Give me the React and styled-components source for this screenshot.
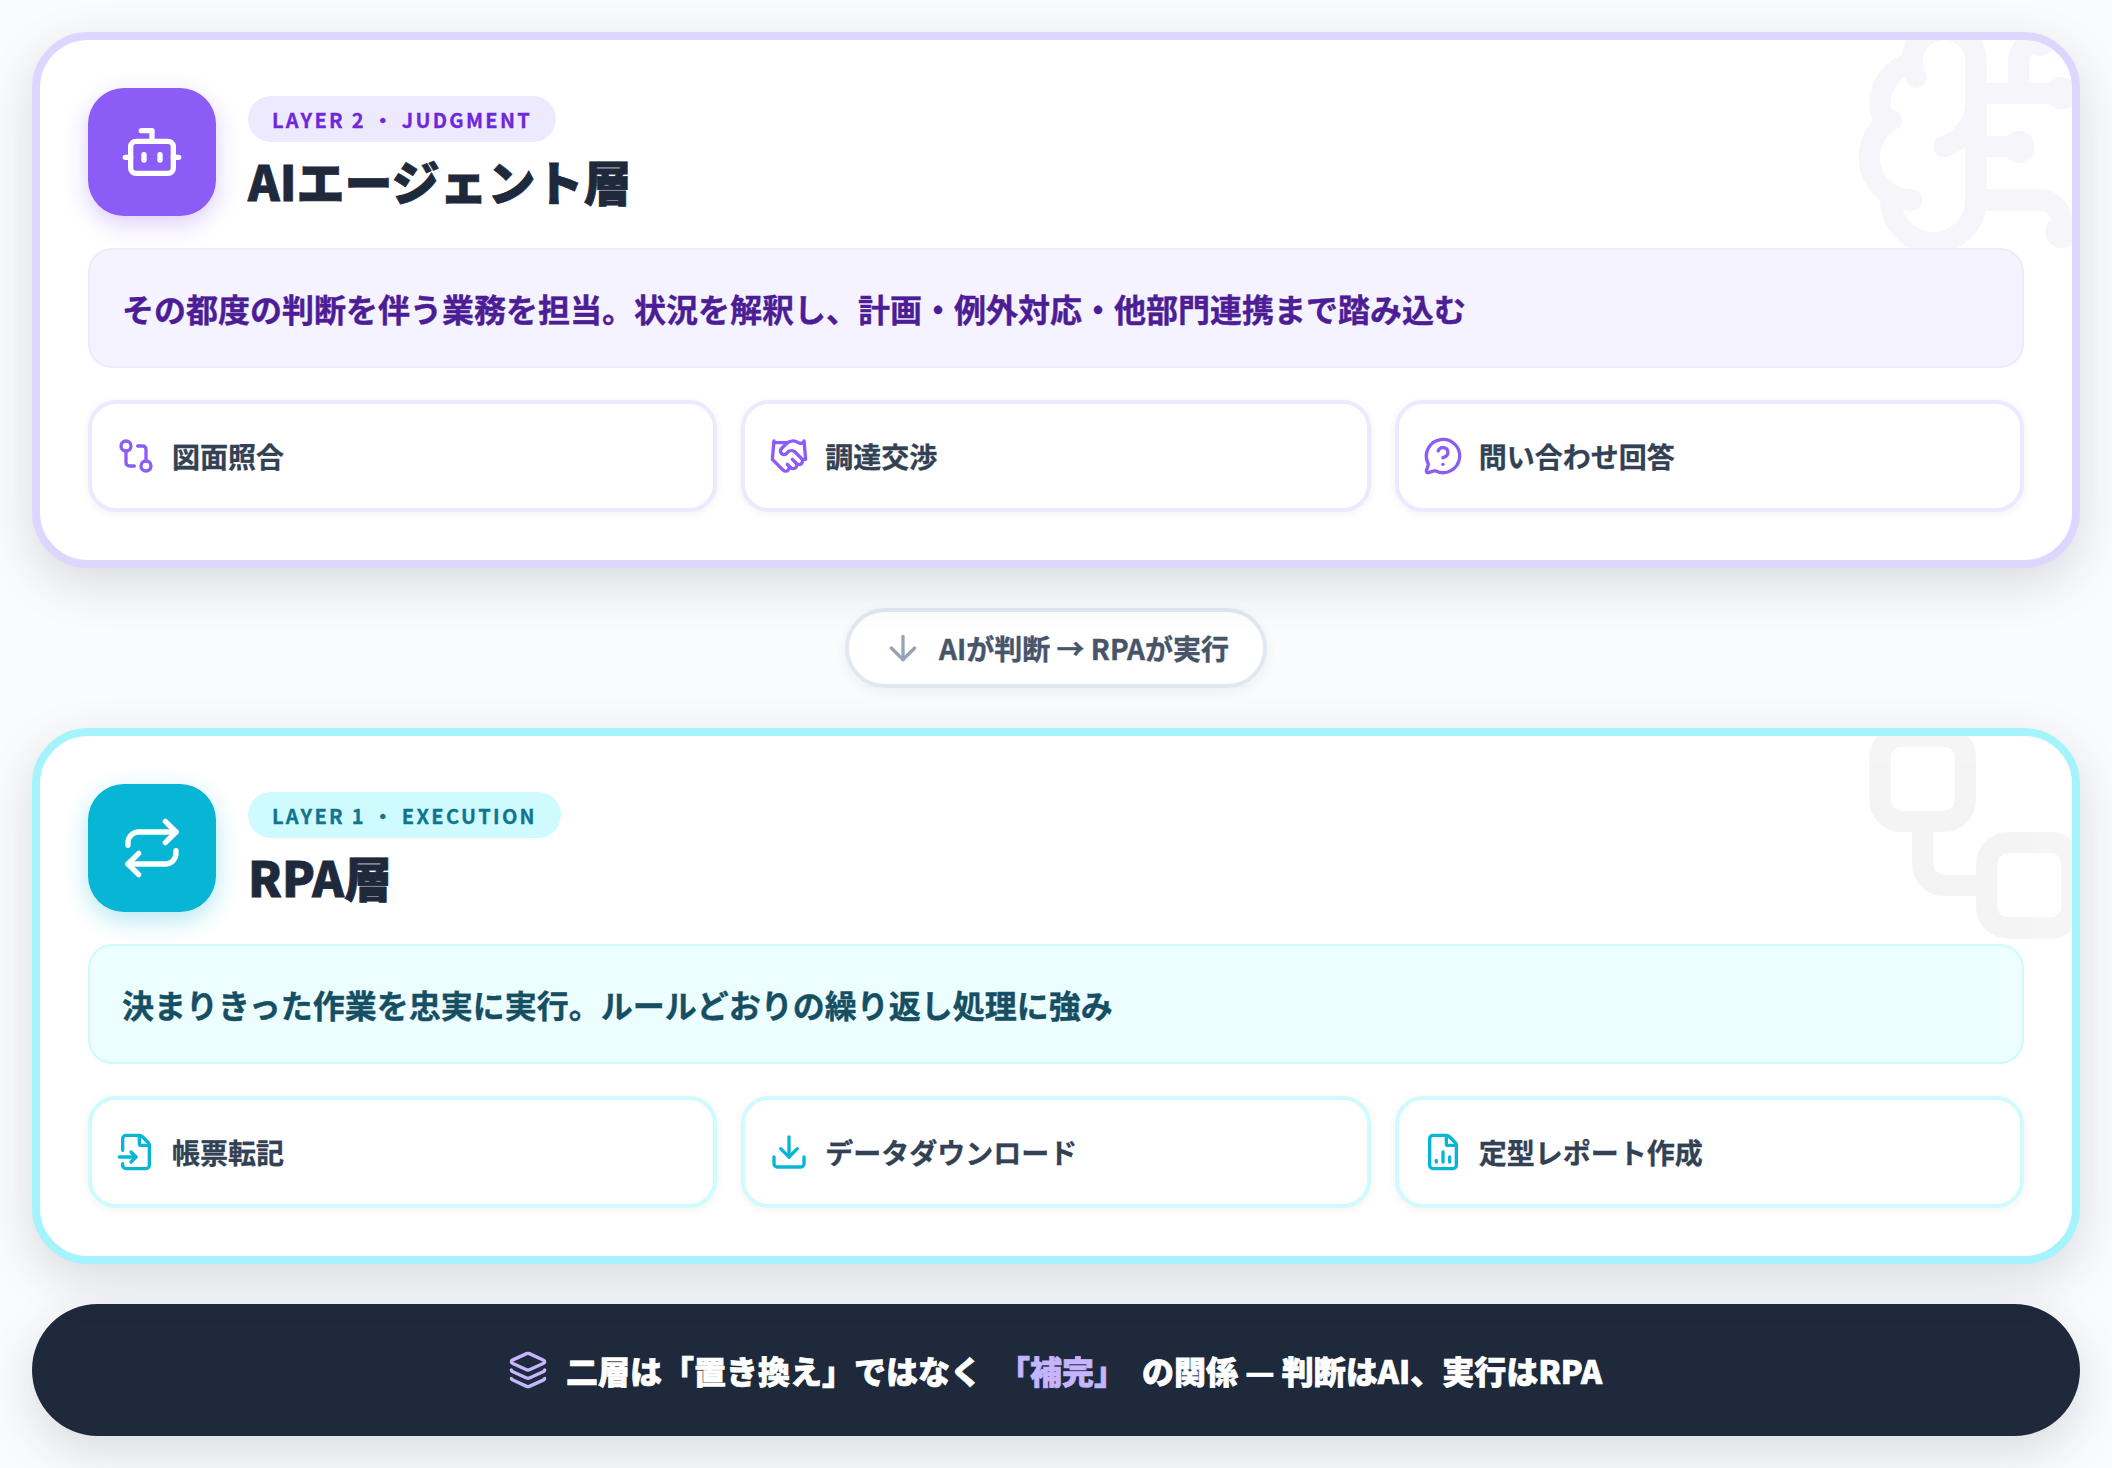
import React from "react";
import styled, { createGlobalStyle } from "styled-components";
import {
  ArrowDown,
  Bot,
  BrainCircuit,
  Download,
  FileChartColumn,
  FileInput,
  GitCompare,
  Handshake,
  Layers,
  MessageCircleQuestion,
  Repeat,
  Workflow,
} from "lucide-react";

const FONT = '"Noto Sans CJK JP", "Noto Sans", sans-serif';

const GlobalStyle = createGlobalStyle`
  html, body {
    margin: 0;
    padding: 0;
    background: #fafbfd;
    font-family: ${FONT};
  }
  * {
    box-sizing: border-box;
  }
`;

const THEMES = {
  violet: {
    border: "#ddd6fe",
    accent: "#8b5cf6",
    glow: "rgba(139, 92, 246, 0.3)",
    badgeBg: "#ede9fe",
    badgeText: "#6d28d9",
    descBg: "#f5f3ff",
    descBorder: "#ede9fe",
    descText: "#4c1d95",
    taskBorder: "#ede9fe",
    mark: "#312e81",
  },
  cyan: {
    border: "#a5f3fc",
    accent: "#06b6d4",
    glow: "rgba(6, 182, 212, 0.3)",
    badgeBg: "#cffafe",
    badgeText: "#0e7490",
    descBg: "#ecfeff",
    descBorder: "#cffafe",
    descText: "#164e63",
    taskBorder: "#cffafe",
    mark: "#1e293b",
  },
};

const LAYERS = [
  {
    tone: "violet",
    badge: "LAYER 2 ・ JUDGMENT",
    title: "AIエージェント層",
    desc: "その都度の判断を伴う業務を担当。状況を解釈し、計画・例外対応・他部門連携まで踏み込む",
    Icon: Bot,
    Mark: BrainCircuit,
    tasks: [
      { label: "図面照合", Icon: GitCompare },
      { label: "調達交渉", Icon: Handshake },
      { label: "問い合わせ回答", Icon: MessageCircleQuestion },
    ],
  },
  {
    tone: "cyan",
    badge: "LAYER 1 ・ EXECUTION",
    title: "RPA層",
    desc: "決まりきった作業を忠実に実行。ルールどおりの繰り返し処理に強み",
    Icon: Repeat,
    Mark: Workflow,
    tasks: [
      { label: "帳票転記", Icon: FileInput },
      { label: "データダウンロード", Icon: Download },
      { label: "定型レポート作成", Icon: FileChartColumn },
    ],
  },
];

const Page = styled.div`
  width: 2112px;
  height: 1468px;
  padding: 32px;
  display: flex;
  flex-direction: column;
  gap: 40px;
  align-items: stretch;
`;

const Card = styled.section`
  position: relative;
  overflow: hidden;
  height: 536px;
  padding: 48px;
  display: flex;
  flex-direction: column;
  gap: 32px;
  background: #fff;
  border: 8px solid ${(p) => THEMES[p.$tone].border};
  border-radius: 56px;
  box-shadow: 0 16px 48px rgba(30, 41, 59, 0.15);
`;

const Watermark = styled.div`
  position: absolute;
  top: -32px;
  right: -32px;
  width: 256px;
  height: 256px;
  color: ${(p) => THEMES[p.$tone].mark};
  opacity: 0.045;
`;

const Header = styled.header`
  position: relative;
  display: flex;
  align-items: center;
  gap: 32px;
`;

const IconTile = styled.div`
  width: 128px;
  height: 128px;
  flex: none;
  display: flex;
  align-items: center;
  justify-content: center;
  border-radius: 36px;
  color: #fff;
  background: ${(p) => THEMES[p.$tone].accent};
  box-shadow: 0 8px 24px ${(p) => THEMES[p.$tone].glow};
`;

const HeaderText = styled.div`
  display: flex;
  flex-direction: column;
  align-items: flex-start;
  gap: 8px;
`;

const Badge = styled.span`
  height: 46px;
  padding: 0 24px;
  display: inline-flex;
  align-items: center;
  border-radius: 23px;
  font-size: 20px;
  font-weight: 700;
  letter-spacing: 2.3px;
  -webkit-text-stroke: 0.3px currentColor;
  color: ${(p) => THEMES[p.$tone].badgeText};
  background: ${(p) => THEMES[p.$tone].badgeBg};
`;

const Title = styled.h2`
  margin: 0;
  padding-top: 3px;
  font-size: 48px;
  line-height: 55px;
  font-weight: 900;
  -webkit-text-stroke: 0.8px currentColor;
  color: #1e293b;
`;

const Desc = styled.p`
  position: relative;
  margin: 0;
  height: 120px;
  padding: 0 32px;
  display: flex;
  align-items: center;
  font-size: 32px;
  font-weight: 700;
  -webkit-text-stroke: 0.4px currentColor;
  color: ${(p) => THEMES[p.$tone].descText};
  background: ${(p) => THEMES[p.$tone].descBg};
  border: 2px solid ${(p) => THEMES[p.$tone].descBorder};
  border-radius: 24px;
`;

const TaskGrid = styled.div`
  position: relative;
  display: grid;
  grid-template-columns: repeat(3, 1fr);
  gap: 24px;
`;

const Task = styled.div`
  height: 112px;
  padding: 0 24px;
  display: flex;
  align-items: center;
  gap: 16px;
  background: #fff;
  border: 4px solid ${(p) => THEMES[p.$tone].taskBorder};
  border-radius: 28px;
  box-shadow: 0 2px 8px rgba(30, 41, 59, 0.06);
  font-size: 28px;
  font-weight: 700;
  -webkit-text-stroke: 0.3px currentColor;
  color: #334155;

  svg {
    flex: none;
    color: ${(p) => THEMES[p.$tone].accent};
    -webkit-text-stroke: 0;
  }
`;

const ConnectorRow = styled.div`
  display: flex;
  justify-content: center;
`;

const Connector = styled.div`
  height: 80px;
  padding: 0 34px;
  display: flex;
  align-items: center;
  gap: 16px;
  background: #fff;
  border: 4px solid #e2e8f0;
  border-radius: 40px;
  box-shadow: 0 4px 12px rgba(30, 41, 59, 0.06);
  font-size: 28px;
  font-weight: 700;
  -webkit-text-stroke: 0.4px currentColor;
  color: #475569;

  svg {
    flex: none;
    color: #94a3b8;
  }
`;

const Summary = styled.footer`
  height: 132px;
  padding-right: 2px;
  display: flex;
  align-items: center;
  justify-content: center;
  gap: 16px;
  background: #1e293b;
  border-radius: 66px;
  box-shadow: 0 16px 48px rgba(30, 41, 59, 0.15);
  font-size: 32px;
  font-weight: 900;
  -webkit-text-stroke: 0.7px currentColor;
  color: #fff;

  svg {
    flex: none;
    margin-right: 2px;
    color: #c4b5fd;
  }
`;

const Accent = styled.span`
  color: #c4b5fd;
`;

function LayerCard({ layer }) {
  const { tone, badge, title, desc, Icon, Mark, tasks } = layer;
  return (
    <Card $tone={tone}>
      <Watermark $tone={tone}>
        <Mark size={256} strokeWidth={2} />
      </Watermark>
      <Header>
        <IconTile $tone={tone}>
          <Icon size={64} strokeWidth={2} />
        </IconTile>
        <HeaderText>
          <Badge $tone={tone}>{badge}</Badge>
          <Title>{title}</Title>
        </HeaderText>
      </Header>
      <Desc $tone={tone}>{desc}</Desc>
      <TaskGrid>
        {tasks.map((task) => (
          <Task key={task.label} $tone={tone}>
            <task.Icon size={40} strokeWidth={2} />
            <span>{task.label}</span>
          </Task>
        ))}
      </TaskGrid>
    </Card>
  );
}

export default function App() {
  return (
    <>
      <GlobalStyle />
      <Page>
        <LayerCard layer={LAYERS[0]} />
        <ConnectorRow>
          <Connector>
            <ArrowDown size={40} strokeWidth={2} />
            <span>AIが判断 → RPAが実行</span>
          </Connector>
        </ConnectorRow>
        <LayerCard layer={LAYERS[1]} />
        <Summary>
          <Layers size={40} strokeWidth={2} />
          <span>二層は「置き換え」ではなく</span>
          <Accent>「補完」</Accent>
          <span>の関係 — 判断はAI、実行はRPA</span>
        </Summary>
      </Page>
    </>
  );
}
